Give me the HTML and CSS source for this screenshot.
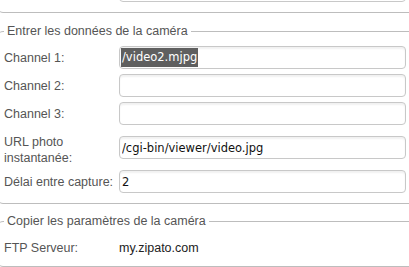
FILE: index.html
```
<!DOCTYPE html>
<html lang="fr">
  <head>
    <meta name="viewport" content="width=device-width" />
    <title>Caméra</title>
    <link rel="stylesheet" href="styles.css">
  </head>
  <body>
    <main class="panel">
      <!-- bottom of the previous group, scrolled partly out of view -->
      <fieldset class="group group-prev">
        <div class="row">
          <label class="label"></label>
          <input class="field" type="text" value="">
        </div>
      </fieldset>

      <fieldset class="group group-camera">
        <legend>Entrer les données de la caméra</legend>
        <div class="row">
          <label class="label">Channel 1:</label>
          <div class="field field-fake"><span class="sel">/video2.mjpg</span></div>
        </div>
        <div class="row">
          <label class="label">Channel 2:</label>
          <input class="field" type="text" value="">
        </div>
        <div class="row row-3">
          <label class="label">Channel 3:</label>
          <input class="field" type="text" value="">
        </div>
        <div class="row row-tall">
          <label class="label">URL photo<br>instantanée:</label>
          <input class="field" type="text" value="/cgi-bin/viewer/video.jpg">
        </div>
        <div class="row">
          <label class="label">Délai entre capture:</label>
          <input class="field" type="text" value="2">
        </div>
      </fieldset>

      <fieldset class="group group-copy">
        <legend>Copier les paramètres de la caméra</legend>
        <div class="row row-info">
          <span class="label">FTP Serveur:</span>
          <span class="value">my.zipato.com</span>
        </div>
      </fieldset>
    </main>
  </body>
</html>
```
FILE: styles.css
```
html,
body {
  margin: 0;
  overflow: hidden;
  background: #fff;
}

body {
  font-family: "Liberation Sans", Arial, sans-serif;
  font-size: 12.5px;
  line-height: 16px;
  color: #555;
}

.panel {
  width: 460px;
  margin-left: -3px;
}

.group {
  margin: 0;
  border: 1px solid #bdbdbd;
  border-radius: 6px;
  padding: 7px 0 10px 6px;
}

.group legend {
  padding: 0 3px;
  color: #555;
  line-height: 16px;
}

.group-prev {
  margin-top: -28px;
  padding-top: 6px;
}

.group-camera {
  margin-top: 10px;
}

.group-copy {
  margin-top: 9px;
  padding-top: 11px;
}

.row {
  display: flex;
  align-items: center;
  margin-bottom: 5px;
}

.row:last-child {
  margin-bottom: 0;
}

.row-3 {
  margin-bottom: 9px;
}

.row-tall {
  align-items: flex-start;
  margin-bottom: 4px;
}

.row-tall .field {
  margin-top: 2px;
}

.label {
  width: 115px;
  flex: none;
}

.field {
  box-sizing: border-box;
  width: 287px;
  height: 23px;
  margin: 0;
  padding: 0 2px;
  border: 1px solid #c8c8c8;
  border-radius: 4px;
  background: #fff;
  box-shadow: inset 0 2px 2px rgba(0, 0, 0, 0.06);
  font-family: "DejaVu Sans", Verdana, sans-serif;
  font-size: 11.5px;
  color: #111;
  outline: none;
}

.field-fake {
  display: flex;
  align-items: center;
  padding-left: 1px;
}

.sel {
  background: #5f5f5f;
  color: #fff;
  padding: 1px 1px 2px;
  line-height: 16px;
}

.value {
  color: #222;
}
```
